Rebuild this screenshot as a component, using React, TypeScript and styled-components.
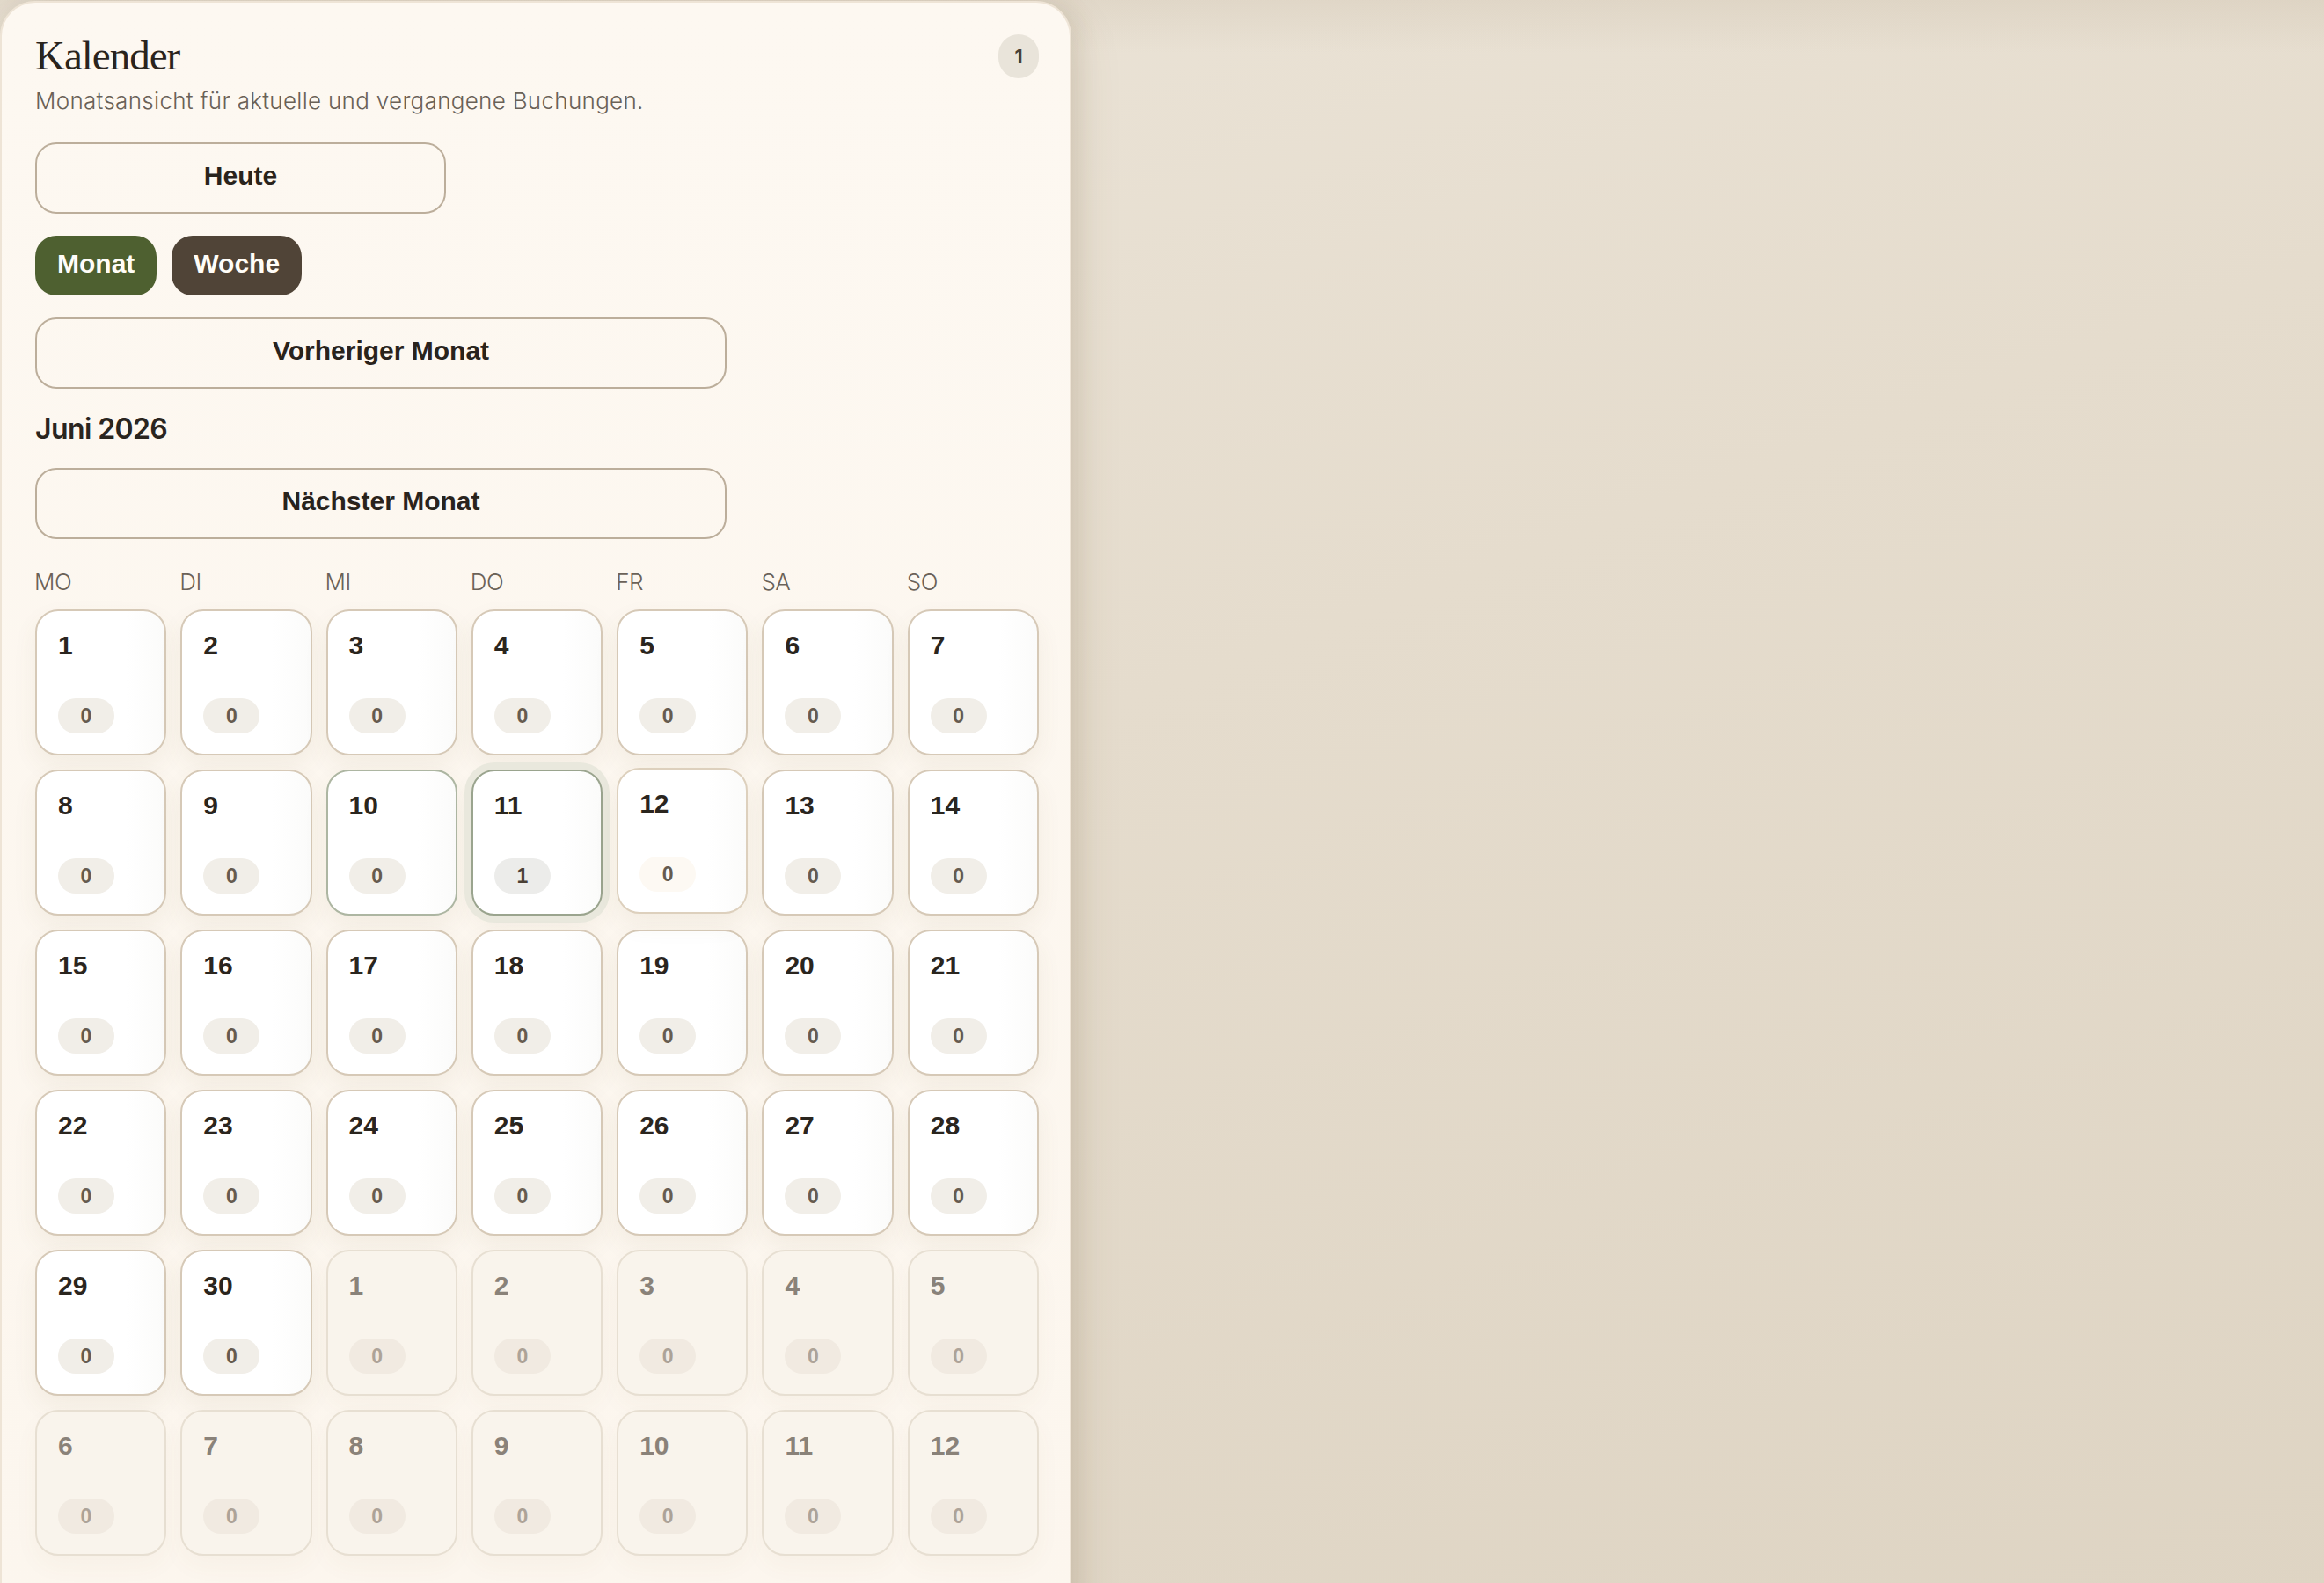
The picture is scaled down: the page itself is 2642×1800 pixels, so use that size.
import React from 'react'
import styled, { createGlobalStyle, css } from 'styled-components'

const GlobalStyle = createGlobalStyle`
  html, body {
    margin: 0;
    padding: 0;
  }
  body {
    min-height: 1800px;
    overflow: hidden;
    background:
      linear-gradient(180deg, rgba(160, 140, 110, 0.12) 0%, rgba(160, 140, 110, 0) 60px),
      linear-gradient(160deg, #ece5d9 0%, #e5dccd 45%, #ded4c3 100%);
    font-family: "Liberation Sans", Arial, sans-serif;
  }
`

type DayKind = 'normal' | 'outside'

interface Day {
  label: number
  count: number
  kind: DayKind
  state?: 'marked' | 'today' | 'hover'
}

const weekdays = ['MO', 'DI', 'MI', 'DO', 'FR', 'SA', 'SO']

const buildDays = (): Day[] => {
  const days: Day[] = []
  for (let d = 1; d <= 30; d++) {
    const day: Day = { label: d, count: d === 11 ? 1 : 0, kind: 'normal' }
    if (d === 10) day.state = 'marked'
    if (d === 11) day.state = 'today'
    if (d === 12) day.state = 'hover'
    days.push(day)
  }
  for (let d = 1; d <= 12; d++) {
    days.push({ label: d, count: 0, kind: 'outside' })
  }
  return days
}

const App = () => {
  const days = buildDays()
  return (
    <>
      <GlobalStyle />
      <Panel>
        <Header>
          <div>
            <Title>Kalender</Title>
            <Subtitle>Monatsansicht für aktuelle und vergangene Buchungen.</Subtitle>
          </div>
          <Badge>1</Badge>
        </Header>

        <Controls>
          <OutlineButton width={467}>Heute</OutlineButton>
          <ToggleRow>
            <Pill tone="green">Monat</Pill>
            <Pill tone="brown">Woche</Pill>
          </ToggleRow>
          <OutlineButton width={786}>Vorheriger Monat</OutlineButton>
          <MonthLabel>Juni 2026</MonthLabel>
          <OutlineButton width={786}>Nächster Monat</OutlineButton>
        </Controls>

        <WeekdayRow>
          {weekdays.map((w) => (
            <Weekday key={w}>{w}</Weekday>
          ))}
        </WeekdayRow>

        <Grid>
          {days.map((day, i) => (
            <Cell key={i} kind={day.kind} state={day.state}>
              <DayNumber kind={day.kind}>{day.label}</DayNumber>
              <Count kind={day.kind} state={day.state}>
                {day.count}
              </Count>
            </Cell>
          ))}
        </Grid>
      </Panel>
    </>
  )
}

export default App

const Panel = styled.div`
  box-sizing: border-box;
  width: 1218px;
  min-height: 1840px;
  margin-top: 1px;
  padding: 33px 35px 40px 38px;
  background: linear-gradient(180deg, #fdf8f1 0%, #fcf6ee 100%);
  border: 2px solid #eee4d6;
  border-bottom: none;
  border-radius: 40px 40px 0 0;
  box-shadow: 0 20px 60px rgba(110, 85, 50, 0.14), 8px 0 24px rgba(110, 85, 50, 0.1);
`

const Header = styled.div`
  display: flex;
  justify-content: space-between;
  align-items: flex-start;
`

const Title = styled.h1`
  margin: 0;
  font-family: "Liberation Serif", "Times New Roman", serif;
  font-weight: 400;
  font-size: 47px;
  line-height: 54px;
  letter-spacing: -1px;
  color: #2a241d;
`

const Subtitle = styled.p`
  margin: 9px 0 0 0;
  font-family: Inter, "Noto Sans", sans-serif;
  font-weight: 300;
  font-size: 26px;
  line-height: 32px;
  letter-spacing: 0.3px;
  color: #6a6157;
`

const Badge = styled.div`
  margin-top: 3px;
  min-width: 46px;
  height: 50px;
  border-radius: 999px;
  background: #e9e4da;
  display: flex;
  align-items: center;
  justify-content: center;
  font-family: Inter, "Noto Sans", sans-serif;
  font-weight: 700;
  font-size: 21px;
  color: #4a3f33;
`

const Controls = styled.div`
  margin-top: 31px;
  display: flex;
  flex-direction: column;
  align-items: flex-start;
  gap: 25px;
`

const OutlineButton = styled.button<{ width: number }>`
  box-sizing: border-box;
  width: ${(p) => p.width}px;
  height: 81px;
  padding: 0 0 5px 0;
  border: 2px solid #bcae9b;
  border-radius: 24px;
  background: transparent;
  font-family: "Liberation Sans", Arial, sans-serif;
  font-weight: 700;
  font-size: 30px;
  color: #29231c;
  cursor: pointer;
`

const ToggleRow = styled.div`
  display: flex;
  gap: 17px;
`

const Pill = styled.button<{ tone: 'green' | 'brown' }>`
  height: 68px;
  padding: 0 25px 4px 25px;
  border: none;
  border-radius: 24px;
  background: ${(p) => (p.tone === 'green' ? '#4e6030' : '#504437')};
  color: #fffdf8;
  font-family: "Liberation Sans", Arial, sans-serif;
  font-weight: 700;
  font-size: 30px;
  cursor: pointer;
`

const MonthLabel = styled.div`
  margin: 1px 0 -1px 0;
  font-family: Inter, "Noto Sans", sans-serif;
  font-weight: 600;
  font-size: 32px;
  line-height: 40px;
  letter-spacing: -0.6px;
  color: #2a251f;
`

const WeekdayRow = styled.div`
  margin-top: 33px;
  display: grid;
  grid-template-columns: repeat(7, 1fr);
  column-gap: 16px;
`

const Weekday = styled.div`
  margin-left: -1px;
  font-family: Inter, "Noto Sans", sans-serif;
  font-weight: 300;
  font-size: 26px;
  line-height: 32px;
  letter-spacing: -0.5px;
  color: #6b6258;
`

const Grid = styled.div`
  margin-top: 15px;
  display: grid;
  grid-template-columns: repeat(7, 1fr);
  column-gap: 16px;
  row-gap: 16px;
`

const Cell = styled.div<{ kind: DayKind; state?: Day['state'] }>`
  box-sizing: border-box;
  height: 166px;
  padding: 21px 22px 23px 24px;
  border-radius: 26px;
  display: flex;
  flex-direction: column;
  justify-content: space-between;
  align-items: flex-start;
  ${(p) =>
    p.kind === 'normal'
      ? css`
          background: linear-gradient(90deg, #ffffff 70%, #fbfbfa 100%);
          border: 2px solid #d6c9b7;
          box-shadow: 0 12px 28px rgba(120, 95, 60, 0.07);
        `
      : css`
          background: #f9f4ec;
          border: 2px solid #e7dfd2;
          box-shadow: 0 12px 28px rgba(120, 95, 60, 0.04);
        `}
  ${(p) =>
    p.state === 'marked' &&
    css`
      border-color: #adb6a2;
    `}
  ${(p) =>
    p.state === 'today' &&
    css`
      border-color: #9aa48e;
      box-shadow: 0 0 0 8px #e9e8dd, 0 12px 28px rgba(120, 95, 60, 0.07);
    `}
  ${(p) =>
    p.state === 'hover' &&
    css`
      transform: translateY(-2px);
      border-color: #ddd0bd;
    `}
`

const DayNumber = styled.div<{ kind: DayKind }>`
  font-family: "Liberation Sans", Arial, sans-serif;
  font-weight: 700;
  font-size: 30px;
  line-height: 36px;
  color: ${(p) => (p.kind === 'normal' ? '#2a251e' : '#8a8279')};
`

const Count = styled.div<{ kind: DayKind; state?: Day['state'] }>`
  box-sizing: border-box;
  min-width: 64px;
  height: 40px;
  padding: 0 24px;
  border-radius: 999px;
  display: inline-flex;
  align-items: center;
  justify-content: center;
  font-family: "Liberation Sans", Arial, sans-serif;
  font-weight: 700;
  font-size: 23px;
  background: ${(p) =>
    p.kind === 'outside'
      ? '#f1eae1'
      : p.state === 'today'
      ? '#ececea'
      : p.state === 'hover'
      ? '#fdf9f3'
      : '#f1eee8'};
  color: ${(p) =>
    p.kind === 'outside' ? '#ada398' : p.state === 'today' ? '#4a4035' : '#665b4f'};
`
